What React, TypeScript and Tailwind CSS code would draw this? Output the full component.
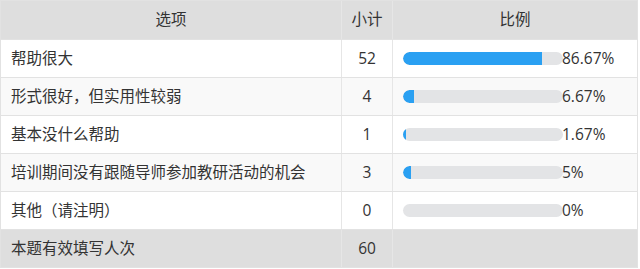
const rows = [
  { label: "帮助很大", count: 52, pct: 86.67, text: "86.67%" },
  { label: "形式很好，但实用性较弱", count: 4, pct: 6.67, text: "6.67%" },
  { label: "基本没什么帮助", count: 1, pct: 1.67, text: "1.67%" },
  { label: "培训期间没有跟随导师参加教研活动的机会", count: 3, pct: 5, text: "5%" },
  { label: "其他（请注明）", count: 0, pct: 0, text: "0%" },
];

export default function App() {
  return (
    <div
      className="bg-white w-[640px] h-[269px] text-[#333] text-[15.5px]"
      style={{ fontFamily: '"Open Sans", "Noto Sans CJK SC", sans-serif' }}
    >
      <div className="w-[638px] border border-[#e2e2e2]">
        {/* Header */}
        <div className="flex h-[39px] bg-[#dedede] border-b border-[#e2e2e2]">
          <div className="w-[341px] border-r border-[#e6e6e6] flex items-center justify-center">选项</div>
          <div className="w-[51px] border-r border-[#e6e6e6] flex items-center justify-center">小计</div>
          <div className="flex-1 flex items-center justify-center">比例</div>
        </div>

        {rows.map((r, i) => (
          <div
            key={r.label}
            className={`flex h-[38px] border-b border-[#e2e2e2] ${i % 2 === 1 ? "bg-[#f9f9f9]" : "bg-white"}`}
          >
            <div className="w-[341px] border-r border-[#e6e6e6] flex items-center pl-[10px]">{r.label}</div>
            <div className="w-[51px] border-r border-[#e6e6e6] flex items-center justify-center">{r.count}</div>
            <div className="flex-1 flex items-center pl-[10px]">
              <div className="w-[160px] h-[13px] rounded-full bg-[#e3e4e6] overflow-hidden">
                <div className="h-full bg-[#2aa0f2] rounded-l-full" style={{ width: `${r.pct}%` }} />
              </div>
              <span className="ml-[-1px]">{r.text}</span>
            </div>
          </div>
        ))}

        {/* Summary */}
        <div className="flex h-[37px] bg-[#dedede]">
          <div className="w-[341px] border-r border-[#e6e6e6] flex items-center pl-[10px]">本题有效填写人次</div>
          <div className="w-[51px] border-r border-[#e6e6e6] flex items-center justify-center">60</div>
          <div className="flex-1" />
        </div>
      </div>
    </div>
  );
}
